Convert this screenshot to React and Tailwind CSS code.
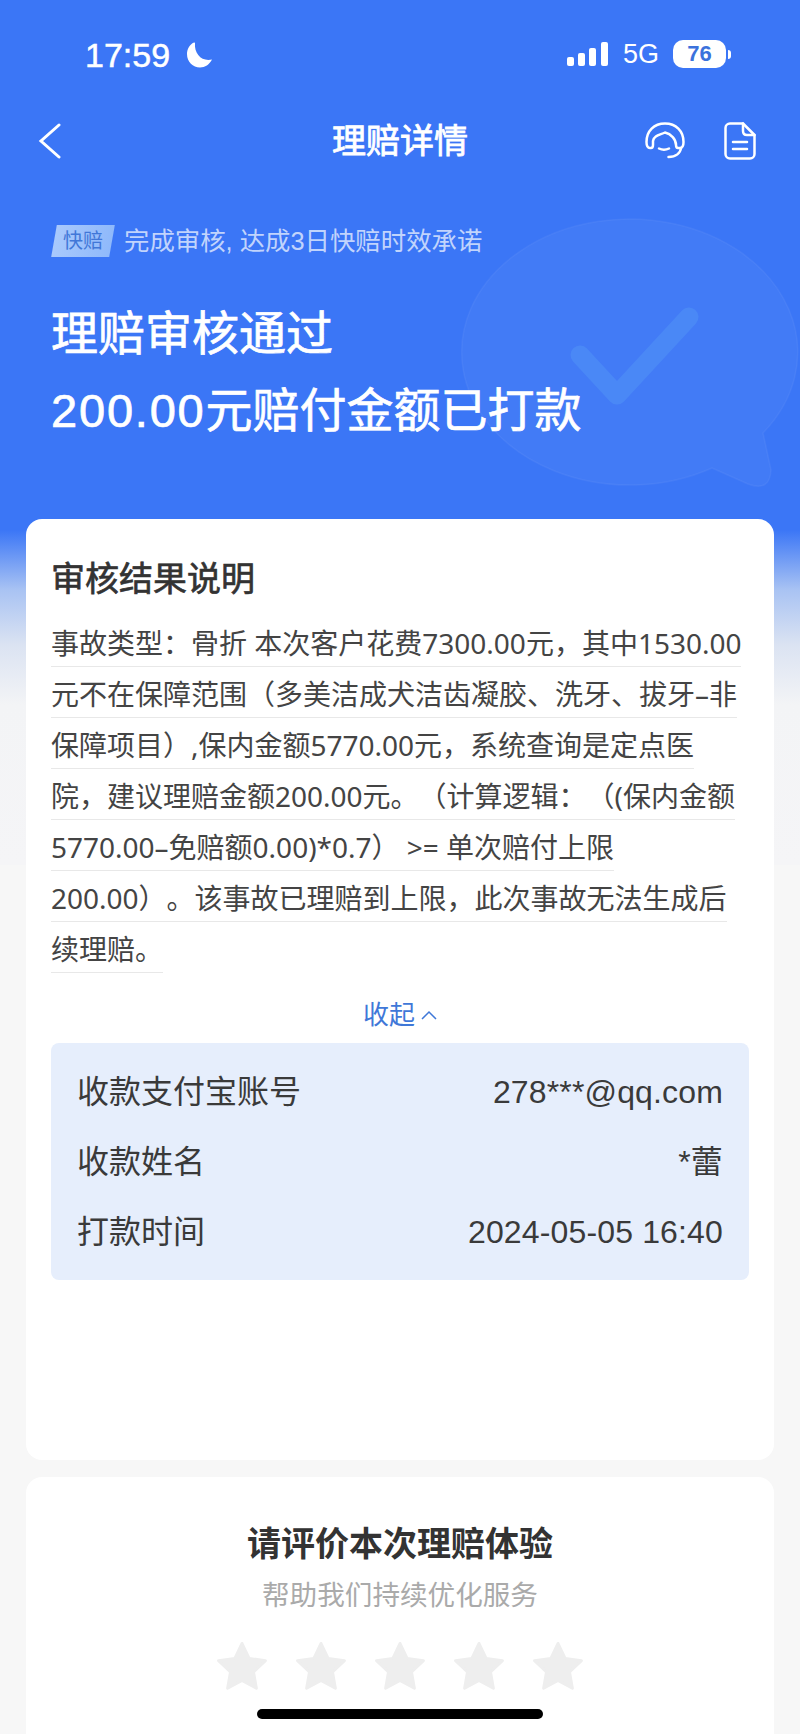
const sans = "font-['Liberation_Sans','Noto_Sans_CJK_SC',sans-serif]";

const detailLines = [
  "事故类型\uFF1A骨折 本次客户花费7300.00元\uFF0C其中1530.00",
  "元不在保障范围\uFF08多美洁成犬洁齿凝胶、洗牙、拔牙–非",
  "保障项目\uFF09,保内金额5770.00元\uFF0C系统查询是定点医",
  "院\uFF0C建议理赔金额200.00元。\uFF08计算逻辑\uFF1A\uFF08(保内金额",
  "5770.00–免赔额0.00)*0.7\uFF09 >= 单次赔付上限",
  "200.00\uFF09。该事故已理赔到上限\uFF0C此次事故无法生成后",
  "续理赔。",
];

const payRows = [
  ["收款支付宝账号", "278***@qq.com"],
  ["收款姓名", "*蕾"],
  ["打款时间", "2024-05-05 16:40"],
];

function StatusBar() {
  return (
    <div className="flex h-[72px] items-end justify-between pb-[1px] pl-[85px] pr-[69px] text-white">
      <div className="flex items-center gap-[17px]">
        <span className="text-[34px] leading-[32px] [-webkit-text-stroke:0.5px_white]">17:59</span>
        <svg width="26" height="26" viewBox="0 0 26 26" fill="white">
          <path d="M7 .5C2.500 2.500 0 7 0 12c0 8 6 13.500 13 13.500 5 0 9.500-3 12-8-10 2.500-18-5.500-17-16.500 0-.5-.5-.7-1-.5z" />
        </svg>
      </div>
      <div className="mb-[3px] flex items-center">
        <svg width="41" height="24" viewBox="0 0 41 24" fill="white">
          <rect x="0" y="15" width="7" height="9" rx="2" />
          <rect x="11" y="11" width="7" height="13" rx="2" />
          <rect x="22" y="6" width="7" height="18" rx="2" />
          <rect x="34" y="0" width="7" height="24" rx="2" />
        </svg>
        <span className="ml-[15px] text-[27px] leading-[28px]">5G</span>
        <span className="ml-[14px] flex h-[28px] w-[53px] items-center justify-center rounded-[10px] bg-white text-[22px] font-bold leading-none text-[#3b72dc]">
          76
        </span>
        <span className="ml-[2px] h-[9px] w-[3px] rounded-r-full bg-white" />
      </div>
    </div>
  );
}

function NavBar() {
  return (
    <div className="relative mt-[49px] flex h-[40px] items-center justify-between pl-[38px] pr-[44px] text-white">
      <svg width="23" height="36" viewBox="0 0 23 36" fill="none" stroke="white" strokeWidth="3" strokeLinecap="round">
        <path d="M21 2 3 18l18 16" />
      </svg>
      <span className="absolute inset-x-0 text-center text-[34px] leading-[40px] [-webkit-text-stroke:0.8px_white]">理赔详情</span>
      <div className="flex items-center gap-[39px]">
        {/* agent with headset */}
        <svg width="40" height="38" viewBox="0 0 40 38" fill="none" stroke="white" strokeWidth="2.500" strokeLinecap="round" strokeLinejoin="round">
          <path d="M5 26c-2.500 0-3.500-2-3.500-6C1.500 9 9 1.500 20 1.500S38.500 9 38.500 20c0 4-1 6-3.500 6h-2c-1.500 0-2-1-2-3 0-6-5-11-11-12.500C15 13 9 13 8 19v4c0 2-.5 3-2 3z" />
          <path d="M14 26.500c3 1.500 7 1.500 10 0" />
          <path d="M36 26c-.5 5-5 9-12.500 9" />
        </svg>
        <svg width="32" height="38" viewBox="0 0 32 38" fill="none" stroke="white" strokeWidth="2.500" strokeLinecap="round" strokeLinejoin="round">
          <path d="M19 1.500H6C3.500 1.500 1.500 3.500 1.500 6v26c0 2.500 2 4.500 4.500 4.500h20c2.500 0 4.500-2 4.500-4.500V13z" />
          <path d="M19 1.500V9c0 2.500 1.500 4 4 4h7.500" />
          <path d="M9 20h14M9 27h14" />
        </svg>
      </div>
    </div>
  );
}

export default function App() {
  return (
    <div className={`relative h-[1734px] w-[800px] overflow-hidden bg-[#f7f7f7] ${sans}`}>
      {/* page background fade */}
      <div className="absolute inset-x-0 top-0 h-[865px] bg-[linear-gradient(to_bottom,#3b76f6_0px,#3b76f6_530px,#a9c3f3_590px,#dbe3f2_645px,#f3f4f6_705px,#f5f5f7_865px)]" />

      {/* big bubble watermark */}
      <svg className="absolute left-[455px] top-[212px]" width="345" height="290" viewBox="455 212 345 290">
        <path
          d="M763 433A168 133 0 1 0 712 468L748 484Q770 492 771 470z"
          fill="#ffffff"
          fillOpacity="0.04"
          stroke="#ffffff"
          strokeOpacity="0.05"
          strokeWidth="1.500"
          strokeLinejoin="round"
        />
        <path d="M580 355l37 40 72-78" fill="none" stroke="#4a88f6" strokeWidth="19" strokeLinecap="round" strokeLinejoin="round" />
      </svg>

      <div className="relative">
        <StatusBar />
        <NavBar />

        {/* result banner */}
        <div className="mt-[64px] flex h-[32px] items-center pl-[54px]">
          <span className="flex h-[32px] w-[58px] -skew-x-[10deg] items-center justify-center bg-[linear-gradient(to_right,#a9c9fc,#8fb9fb)]">
            <span className="skew-x-[10deg] text-[20px] leading-none text-[#4177d8]">快赔</span>
          </span>
          <span className="ml-[12px] text-[25.400px] leading-[32px] text-white/70">完成审核, 达成3日快赔时效承诺</span>
        </div>
        <div className="mt-[38px] pl-[51px] text-[47px] leading-[77px] text-white [-webkit-text-stroke:0.7px_white]">
          <div>理赔审核通过</div>
          <div>
            <span className="tracking-[1.800px]">200.00</span>元赔付金额已打款
          </div>
        </div>

        {/* audit card */}
        <div className="mx-[26px] mt-[70px] flex h-[941px] flex-col rounded-[16px] bg-white px-[25px] pt-[38px]">
          <h2 className="text-[34px] leading-[44px] text-[#333333] [-webkit-text-stroke:0.7px_#333333]">审核结果说明</h2>
          <div className="mt-[15px] font-['Noto_Sans','Noto_Sans_CJK_SC',sans-serif] text-[28px] text-[#444444] [text-spacing-trim:space-all]">
            {detailLines.map((line) => (
              <div key={line} className="w-fit whitespace-pre border-b border-[#e8e8e8] pt-[4px] leading-[46px]">
                {line}
              </div>
            ))}
          </div>
          <div className="mt-[24px] flex items-center justify-center gap-[6px] text-[26px] leading-[36px] text-[#3f78d8]">
            收起
            <svg width="16" height="10" viewBox="0 0 16 10" fill="none" stroke="#3f78d8" strokeWidth="1.500">
              <path d="M1 9l7-7 7 7" />
            </svg>
          </div>
          <div className="mt-[10px] flex flex-col gap-[26px] rounded-[8px] bg-[#e6eefc] px-[26px] pb-[26px] pt-[27px] text-[32px] leading-[44px] text-[#3a3a3a]">
            {payRows.map(([label, value]) => (
              <div key={label} className="flex items-center justify-between">
                <span>{label}</span>
                <span className="tracking-[0.15px]">{value}</span>
              </div>
            ))}
          </div>
        </div>

        {/* rating card */}
        <div className="mx-[26px] mt-[17px] flex h-[300px] flex-col items-center rounded-[16px] bg-white pt-[45px]">
          <h3 className="text-[34px] font-bold leading-[44px] text-[#333333]">请评价本次理赔体验</h3>
          <p className="mt-[8px] text-[27.600px] leading-[44px] text-[#aaaaaa]">帮助我们持续优化服务</p>
          <div className="mt-[23px] flex gap-[29px]">
            {[0, 1, 2, 3, 4].map((i) => (
              <svg key={i} width="50" height="50" viewBox="0 0 52 51" fill="#eeeeee" stroke="#eeeeee" strokeWidth="3" strokeLinejoin="round">
                <path d="M26 2l7.400 15.600 17 2.300-12.400 11.900 3 16.900L26 40.600l-15 8.100 3-16.900L1.600 19.900l17-2.300z" />
              </svg>
            ))}
          </div>
        </div>
      </div>

      {/* home indicator */}
      <div className="absolute left-[257px] top-[1709px] h-[10px] w-[286px] rounded-full bg-black" />
    </div>
  );
}
